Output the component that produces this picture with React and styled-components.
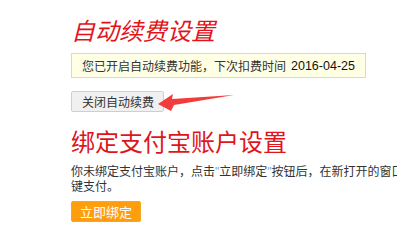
import React from "react";
import styled, { createGlobalStyle } from "styled-components";

const GlobalStyle = createGlobalStyle`
  body {
    margin: 0;
    background: #fff;
    overflow: hidden;
    font-family: "Noto Sans CJK SC", "Liberation Sans", sans-serif;
  }
`;

const Page = styled.div`
  padding: 16px 0 0 71px;
  width: 400px;
`;

const Title = styled.h2`
  margin: ${(p) => p.$top || 0}px 0 0;
  font-size: 24px;
  line-height: 28px;
  font-weight: normal;
  color: #e0141a;
  font-style: ${(p) => (p.$italic ? "italic" : "normal")};
  white-space: nowrap;
`;

const Notice = styled.div`
  box-sizing: border-box;
  width: 295px;
  height: 25px;
  margin-top: 9px;
  padding: 0 0 0 10px;
  display: flex;
  align-items: center;
  background: #ffffe6;
  border: 1px solid #ebe07e;
  font-size: 12px;
  color: #333;
  white-space: nowrap;
`;

const Date = styled.span`
  margin-left: 5px;
  font-family: "Liberation Sans", sans-serif;
  font-size: 12.5px;
  color: #111;
`;

const ButtonRow = styled.div`
  position: relative;
  margin-top: 10px;
  height: 21px;
`;

const GrayButton = styled.button`
  box-sizing: border-box;
  height: 21px;
  padding: 0 9px 0 10px;
  border: 1px solid #cfcfcf;
  border-radius: 2px;
  background: #f0f0f0;
  font-family: inherit;
  font-size: 12px;
  line-height: 19px;
  color: #333;
`;

const Arrow = styled.svg`
  position: absolute;
  left: 86px;
  top: 3px;
`;

const Text = styled.p`
  margin: 9px 0 0;
  width: 384px;
  font-size: 12px;
  line-height: 14px;
  color: #333;
`;

const Quote = styled.span`
  font-family: "Liberation Sans", sans-serif;
  color: #6fa6d8;
`;

const OrangeButton = styled.button`
  box-sizing: border-box;
  margin-top: 8px;
  width: 70px;
  height: 21px;
  padding: 0;
  border: 1px solid #f5a623;
  border-radius: 2px;
  background: #ff9e0c;
  font-family: inherit;
  font-size: 13px;
  line-height: 19px;
  color: #fff;
`;

export default function App() {
  return (
    <Page>
      <GlobalStyle />
      <Title $italic>自动续费设置</Title>
      <Notice>
        您已开启自动续费功能，下次扣费时间<Date>2016-04-25</Date>
      </Notice>
      <ButtonRow>
        <GrayButton>关闭自动续费</GrayButton>
        <Arrow width="80" height="22" viewBox="0 0 80 22">
          <polygon
            points="1,13 16,3 15,8 77,4 17,14 14,20"
            fill="#f23c3c"
          />
        </Arrow>
      </ButtonRow>
      <Title $top={18}>绑定支付宝账户设置</Title>
      <Text>
        你未绑定支付宝账户，点击<Quote>"</Quote>立即绑定<Quote>"</Quote>按钮后，在新打开的窗口中完成一键支付。
      </Text>
      <OrangeButton>立即绑定</OrangeButton>
    </Page>
  );
}
